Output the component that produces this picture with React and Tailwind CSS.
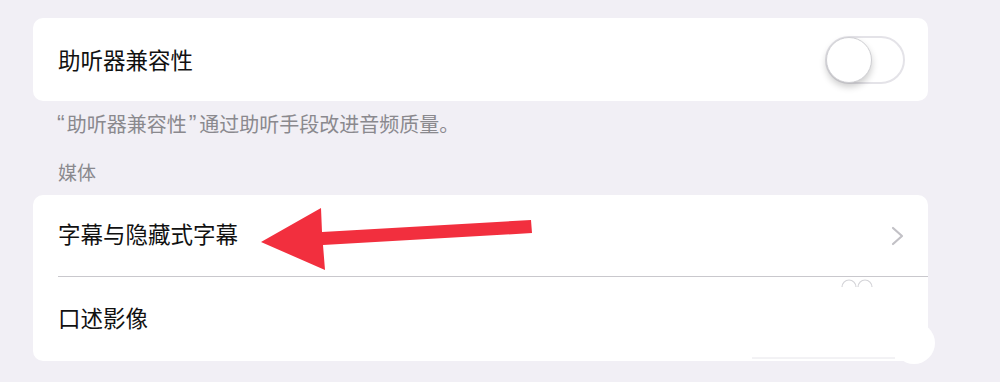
export default function App() {
  const font = { fontFamily: '"Liberation Sans", "Noto Sans CJK SC", sans-serif' };
  return (
    <div className="relative w-[1000px] h-[382px] overflow-hidden bg-[#f1eff5]" style={font}>
      <div className="pt-[18px] pl-[33px] w-[928px]">
        <div className="h-[83px] bg-white rounded-[10px] flex items-center pl-[25px] pr-[23px]">
          <span className="flex-1 text-[22.5px] leading-none text-[#111] pt-[5px]">助听器兼容性</span>
          <div className="relative w-[80px] h-[48px] rounded-full border-2 border-[#e4e3e8] bg-white">
            <div className="absolute left-[-1px] top-[-1px] w-[46px] h-[46px] rounded-full bg-white border border-[#cfcfd3] shadow-[0_4px_7px_rgba(0,0,0,0.2)]"></div>
          </div>
        </div>
        <div className="mt-[11px] pl-[23px] h-[24px] text-[20px] leading-[24px] text-[#8a898e]">
          <span className="text-[23px] ml-[1px] mr-[2px]">“</span>助听器兼容性<span className="text-[23px] ml-[2px] mr-[3px]">”</span>通过助听手段改进音频质量。
        </div>
        <div className="mt-[26px] pl-[25px] h-[24px] text-[19px] leading-[24px] text-[#8a898e]">媒体</div>
        <div className="mt-[9px] bg-white rounded-[10px]">
          <div className="h-[82px] flex items-center pl-[25px] pr-[23px] border-b border-[#c9c8cd]">
            <span className="flex-1 text-[22.5px] leading-none text-[#111] pt-[2px]">字幕与隐藏式字幕</span>
            <svg width="14" height="20" viewBox="0 0 14 20">
              <path d="M2 2 L11 10 L2 18" fill="none" stroke="#c2c1c6" strokeWidth="2.2" strokeLinecap="round" strokeLinejoin="round" />
            </svg>
          </div>
          <div className="h-[84px] flex items-center pl-[25px]">
            <span className="text-[22.5px] leading-none text-[#111] pt-[2px]">口述影像</span>
          </div>
        </div>
      </div>
      <svg className="absolute inset-0 pointer-events-none" width="1000" height="382" viewBox="0 0 1000 382">
        <rect x="33" y="276" width="25" height="3" fill="#ffffff" />
        <polygon points="261,242 321,208 322,232 531,220 532,233 323,245 325,270" fill="#f22f3e" />
        <path d="M842 287 A7 7 0 0 1 856 287" fill="none" stroke="#d4d4d8" strokeWidth="1.2" />
        <path d="M858 287 A7 7 0 0 1 872 287" fill="none" stroke="#d4d4d8" strokeWidth="1.2" />
        <circle cx="914" cy="343" r="21" fill="#ffffff" />
        <line x1="752" y1="358" x2="895" y2="358" stroke="#e6e5ea" strokeWidth="1" />
      </svg>
    </div>
  );
}
